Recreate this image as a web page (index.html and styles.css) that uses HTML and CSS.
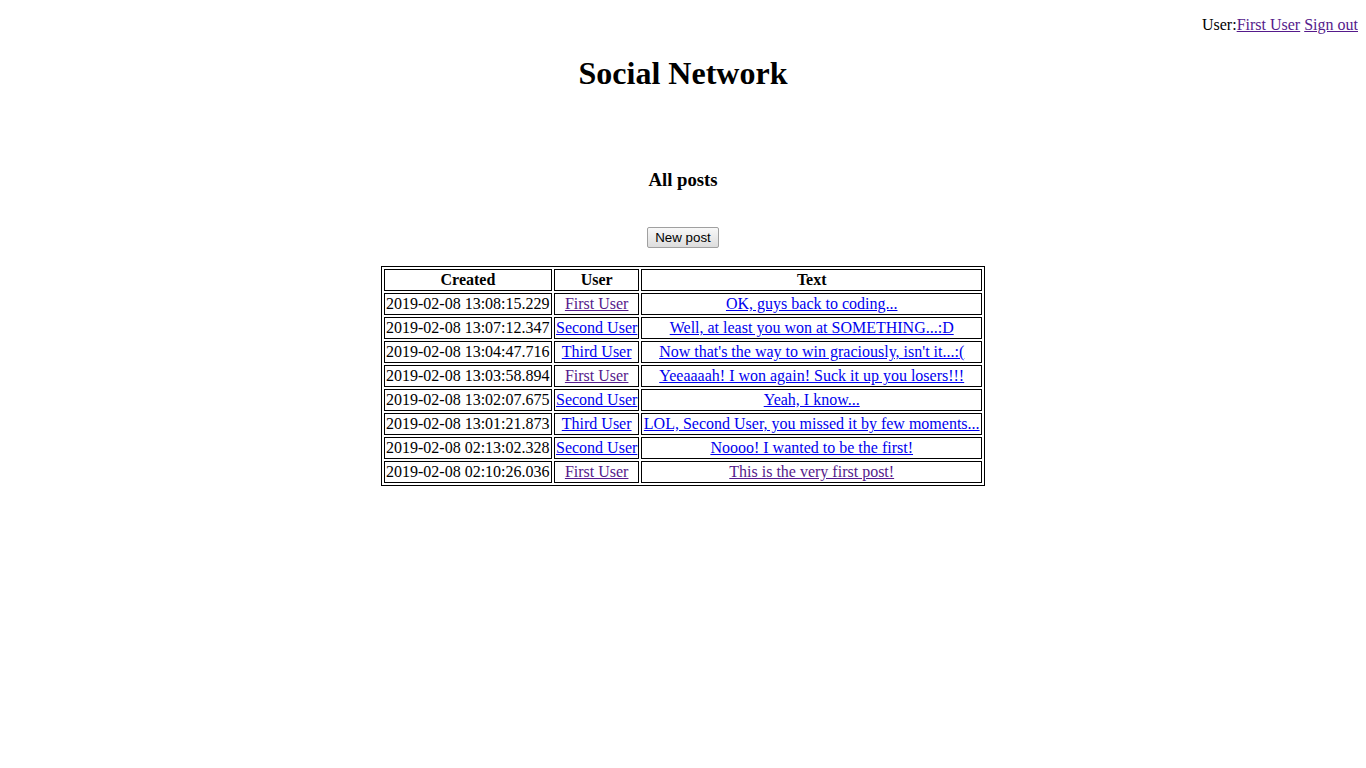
FILE: index.html
```html
<!DOCTYPE html>
<html>
<head>
<meta charset="utf-8">
<title>Social Network</title>
<link rel="stylesheet" href="styles.css">
</head>
<body>
<p class="userbar">User:<a class="visited" href="#">First User</a> <a class="visited" href="#">Sign out</a></p>
<h1 class="title">Social Network</h1>
<h3 class="subtitle">All posts</h3>
<div class="actions"><button class="btn" type="button">New post</button></div>
<table class="posts">
<thead>
<tr><th>Created</th><th>User</th><th>Text</th></tr>
</thead>
<tbody>
<tr><td>2019-02-08 13:08:15.229</td><td class="c"><a class="visited" href="#">First User</a></td><td class="c"><a href="#">OK, guys back to coding...</a></td></tr>
<tr><td>2019-02-08 13:07:12.347</td><td class="c"><a href="#">Second User</a></td><td class="c"><a href="#">Well, at least you won at SOMETHING...:D</a></td></tr>
<tr><td>2019-02-08 13:04:47.716</td><td class="c"><a href="#">Third User</a></td><td class="c"><a href="#">Now that's the way to win graciously, isn't it...:(</a></td></tr>
<tr><td>2019-02-08 13:03:58.894</td><td class="c"><a class="visited" href="#">First User</a></td><td class="c"><a href="#">Yeeaaaah! I won again! Suck it up you losers!!!</a></td></tr>
<tr><td>2019-02-08 13:02:07.675</td><td class="c"><a href="#">Second User</a></td><td class="c"><a href="#">Yeah, I know...</a></td></tr>
<tr><td>2019-02-08 13:01:21.873</td><td class="c"><a href="#">Third User</a></td><td class="c"><a href="#">LOL, Second User, you missed it by few moments...</a></td></tr>
<tr><td>2019-02-08 02:13:02.328</td><td class="c"><a href="#">Second User</a></td><td class="c"><a href="#">Noooo! I wanted to be the first!</a></td></tr>
<tr><td>2019-02-08 02:10:26.036</td><td class="c"><a class="visited" href="#">First User</a></td><td class="c"><a class="visited" href="#">This is the very first post!</a></td></tr>
</tbody>
</table>
</body>
</html>
```
FILE: styles.css
```css
html, body {
  background: #ffffff;
}
body {
  margin: 8px;
  font-family: "Liberation Serif", "Times New Roman", serif;
  font-size: 16px;
  color: #000000;
}
a {
  color: #0000ee;
  text-decoration: underline;
}
a.visited {
  color: #551a8b;
}
.userbar {
  text-align: right;
  margin: 8px 0 0 0;
  line-height: 18px;
}
.title {
  text-align: center;
  font-size: 32px;
  font-weight: bold;
  line-height: 37px;
  margin: 21px 0 0 0;
}
.subtitle {
  text-align: center;
  font-size: 18.72px;
  font-weight: bold;
  line-height: 22px;
  margin: 77px 0 0 0;
}
.actions {
  text-align: center;
  margin-top: 36px;
  line-height: 0;
}
.btn {
  font-family: "Liberation Sans", Arial, sans-serif;
  font-size: 13.33px;
  color: #000000;
  height: 21px;
  padding: 1px 7px;
  background: linear-gradient(#f8f8f8, #dddddd);
  border: 1px solid #a0a0a0;
  border-radius: 2px;
  line-height: 15px;
}
.posts {
  margin: 18px auto 0 auto;
  width: 604px;
  border: 1px solid #000000;
  border-spacing: 2px;
  border-collapse: separate;
}
.posts th,
.posts td {
  border: 1px solid #000000;
  padding: 1px;
  line-height: 18px;
  white-space: nowrap;
}
.posts th {
  font-weight: bold;
  text-align: center;
}
.posts td.c {
  text-align: center;
}
```
